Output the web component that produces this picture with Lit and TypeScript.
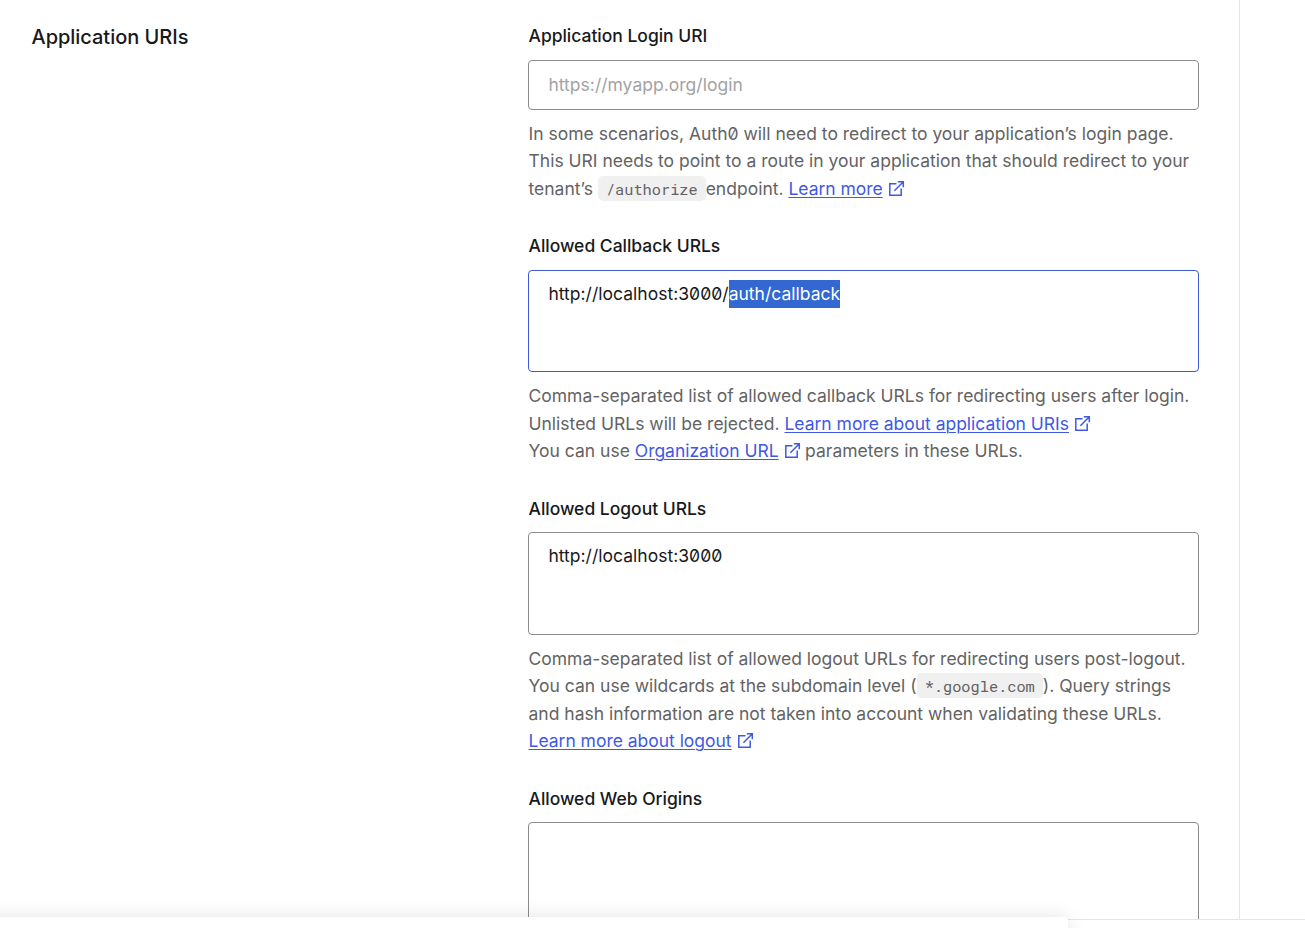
import { LitElement, html, css, svg } from "lit";
import { customElement, property } from "lit/decorators.js";

@customElement("external-link")
class ExternalLink extends LitElement {
  @property() label = "";
  static styles = css`
    a { color: #3f59e4; text-decoration: underline; text-decoration-thickness: 1px; text-underline-offset: 2px; letter-spacing: -0.02px; }
    svg { width: 17px; height: 17px; margin: 0 -0.5px 0 5px; vertical-align: -2px; color: #3f59e4; }
  `;
  render() {
    return html`<a>${this.label}</a><svg viewBox="0 0 17 17" fill="none" stroke="currentColor" stroke-width="1.5">${svg`<path d="M8.5 3.8H1.8V15.2H13.2V8.6M9.8 1.8H15.3V7.2M15.1 2L6.4 10.7"/>`}</svg>`;
  }
}

@customElement("form-field")
class FormField extends LitElement {
  @property() label = "";
  @property({ type: Boolean, reflect: true }) single = false;
  @property({ type: Boolean, reflect: true }) active = false;
  static styles = css`
    :host { display: block; margin-bottom: 30px; }
    .label { color: #18191b; font-weight: 500; height: 27.5px; line-height: 27.5px; margin-bottom: 10px; padding-left: 0.5px; letter-spacing: -0.02px; }
    .box { box-sizing: border-box; height: 102.5px; border: 1px solid #8c8c8c; border-radius: 4px; padding: 9px 19.4px; color: #18191b; background: #fff; letter-spacing: 0.02px; }
    :host([single]) .box { height: 50px; padding-top: 10px; }
    :host([active]) .box { border-color: #3f59d6; }
    .help { margin-top: 10px; padding-left: 0.5px; color: #636363; white-space: nowrap; }
  `;
  render() {
    return html`<div class="label">${this.label}</div>
      <div class="box"><slot name="value"></slot></div>
      <div class="help"><slot></slot></div>`;
  }
}

@customElement("app-root")
class AppRoot extends LitElement {
  static styles = css`
    :host {
      display: block; position: relative; height: 928px; overflow: hidden; background: #fff;
      font: 400 17.5px/27.5px Inter, "Liberation Sans", sans-serif;
      font-feature-settings: "zero" 1;
    }
    .page { box-sizing: border-box; display: grid; grid-template-columns: 496.5px 671px; width: 1240px; height: 920px; padding: 22.1px 0 0 31.5px; border-right: 1px solid #e5e5e5; overflow: hidden; }
    .title { margin: 0; font-size: 20px; line-height: 30px; font-weight: 500; color: #18191b; letter-spacing: -0.03px; }
    .placeholder { color: #a3a3a3; }
    .selected { display: inline-block; height: 28px; line-height: 28px; background: #3367d1; color: #fff; }
    .code { display: inline-block; box-sizing: border-box; height: 25px; line-height: 27px; margin: -4.5px 0 -1.5px; padding: 0 8px; border-radius: 5px; background: #f0f0f0; font-family: "Roboto Mono", "Liberation Mono", monospace; font-size: 15.3px; vertical-align: middle; color: #636363; }
    .edge { position: absolute; left: 0; right: 0; top: 919px; height: 9px; box-sizing: border-box; border-top: 1px solid #e5e5e5; background: #fff; }
    .footer { position: absolute; left: -20px; top: 917px; width: 1088px; height: 60px; border-radius: 4px; background: #fff; box-shadow: 0 0 20px rgba(0, 0, 0, 0.11); }
  `;
  render() {
    return html`
      <main class="page">
        <h2 class="title">Application URIs</h2>
        <section>
          <form-field single label="Application Login URI">
            <span slot="value" class="placeholder">https://myapp.org/login</span>
            In some scenarios, Auth0 will need to redirect to your application’s login page.<br />
            This URI needs to point to a route in your application that should redirect to your<br />
            tenant’s <span class="code">/authorize</span>endpoint. <external-link label="Learn more"></external-link>
          </form-field>
          <form-field active label="Allowed Callback URLs">
            <span slot="value">http://localhost:3000/<span class="selected">auth/callback</span></span>
            Comma-separated list of allowed callback URLs for redirecting users after login.<br />
            Unlisted URLs will be rejected. <external-link label="Learn more about application URIs"></external-link><br />
            You can use <external-link label="Organization URL"></external-link> parameters in these URLs.
          </form-field>
          <form-field label="Allowed Logout URLs">
            <span slot="value">http://localhost:3000</span>
            Comma-separated list of allowed logout URLs for redirecting users post-logout.<br />
            You can use wildcards at the subdomain level (<span class="code">*.google.com</span>). Query strings<br />
            and hash information are not taken into account when validating these URLs.<br />
            <external-link label="Learn more about logout"></external-link>
          </form-field>
          <form-field label="Allowed Web Origins"></form-field>
        </section>
      </main>
      <div class="edge"></div>
      <div class="footer"></div>
    `;
  }
}
